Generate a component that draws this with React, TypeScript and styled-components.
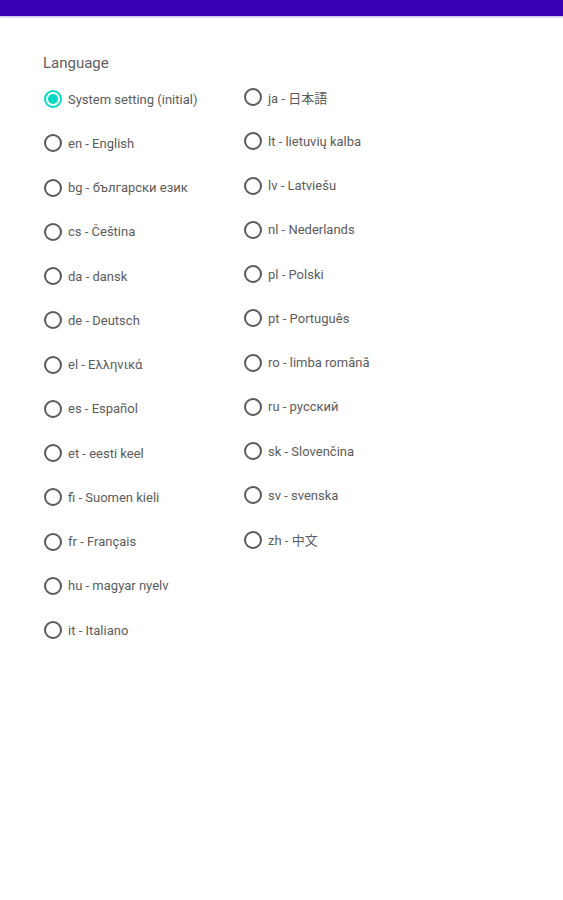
import React, { useState } from "react";
import styled, { createGlobalStyle } from "styled-components";

const Global = createGlobalStyle`
  html, body { margin: 0; padding: 0; background: #ffffff; }
  body { font-family: Roboto, "Noto Sans", "Noto Sans CJK JP", sans-serif; }
`;

const TopBar = styled.div`
  height: 16px;
  background: #3700b3;
  box-shadow: 0 1px 2px rgba(55, 0, 179, 0.35);
`;

const Content = styled.div`
  padding: 37px 0 0 43px;
`;

const Title = styled.div`
  font-size: 15px;
  color: #5f5f5f;
  line-height: 20px;
  height: 20px;
  margin-bottom: 4px;
`;

const Columns = styled.div`
  display: flex;
`;

const Column = styled.div<{ $offset: number }>`
  width: 200px;
  display: flex;
  flex-direction: column;
  margin-top: ${(p) => p.$offset}px;
`;

const Row = styled.label`
  height: 44.25px;
  display: flex;
  align-items: center;
  cursor: pointer;
`;

const Circle = styled.span<{ $checked: boolean }>`
  box-sizing: border-box;
  width: 18px;
  height: 18px;
  margin-left: 1px;
  border-radius: 50%;
  border: 2px solid ${(p) => (p.$checked ? "#03dac5" : "#5a5a5a")};
  display: flex;
  align-items: center;
  justify-content: center;
  flex-shrink: 0;
  &::after {
    content: "";
    width: 10px;
    height: 10px;
    border-radius: 50%;
    background: #03dac5;
    display: ${(p) => (p.$checked ? "block" : "none")};
  }
`;

const Text = styled.span`
  margin-left: 6px;
  font-size: 13px;
  color: #5c5c5c;
  white-space: nowrap;
`;

const left = [
  ["system", "System setting (initial)"],
  ["en", "en - English"],
  ["bg", "bg - български език"],
  ["cs", "cs - Čeština"],
  ["da", "da - dansk"],
  ["de", "de - Deutsch"],
  ["el", "el - Ελληνικά"],
  ["es", "es - Español"],
  ["et", "et - eesti keel"],
  ["fi", "fi - Suomen kieli"],
  ["fr", "fr - Français"],
  ["hu", "hu - magyar nyelv"],
  ["it", "it - Italiano"],
];

const right = [
  ["ja", "ja - 日本語"],
  ["lt", "lt - lietuvių kalba"],
  ["lv", "lv - Latviešu"],
  ["nl", "nl - Nederlands"],
  ["pl", "pl - Polski"],
  ["pt", "pt - Português"],
  ["ro", "ro - limba română"],
  ["ru", "ru - русский"],
  ["sk", "sk - Slovenčina"],
  ["sv", "sv - svenska"],
  ["zh", "zh - 中文"],
];

export default function App() {
  const [value, setValue] = useState("system");
  const renderRow = ([code, label]: string[]) => (
    <Row key={code} onClick={() => setValue(code)}>
      <Circle $checked={value === code} />
      <Text>{label}</Text>
    </Row>
  );
  return (
    <>
      <Global />
      <TopBar />
      <Content>
        <Title>Language</Title>
        <Columns>
          <Column $offset={0}>{left.map(renderRow)}</Column>
          <Column $offset={-2}>{right.map(renderRow)}</Column>
        </Columns>
      </Content>
    </>
  );
}
